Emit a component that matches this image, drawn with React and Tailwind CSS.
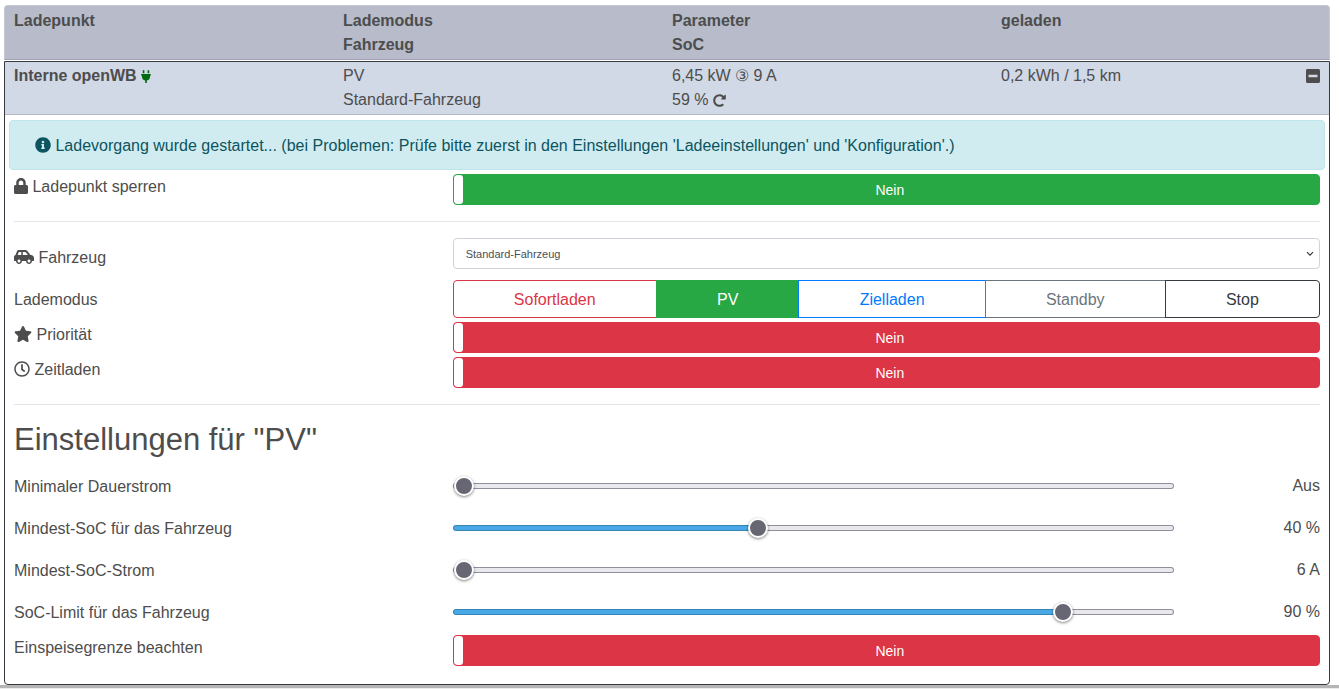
import { useState } from 'react'
import {
  FaPlug, FaRedoAlt, FaMinusSquare, FaInfoCircle, FaLock, FaCarSide, FaStar, FaRegClock,
} from 'react-icons/fa'
import clsx from 'clsx'

const chargeModes = [
  { id: 'instant', label: 'Sofortladen', idle: 'border-[#dc3545] text-[#dc3545]', active: 'border-[#dc3545] bg-[#dc3545] text-white' },
  { id: 'pv', label: 'PV', idle: 'border-[#28a745] text-[#28a745]', active: 'border-[#28a745] bg-[#28a745] text-white' },
  { id: 'target', label: 'Zielladen', idle: 'border-[#007bff] text-[#007bff]', active: 'border-[#007bff] bg-[#007bff] text-white' },
  { id: 'standby', label: 'Standby', idle: 'border-[#6c757d] text-[#6c757d]', active: 'border-[#6c757d] bg-[#6c757d] text-white' },
  { id: 'stop', label: 'Stop', idle: 'border-[#343a40] text-[#343a40]', active: 'border-[#343a40] bg-[#343a40] text-white' },
]

const sliders = [
  { id: 'min-current', label: 'Minimaler Dauerstrom', min: 0, max: 16, step: 1, value: 0, format: (v) => (v ? `${v} A` : 'Aus') },
  { id: 'min-soc', label: 'Mindest-SoC für das Fahrzeug', min: 0, max: 95, step: 5, value: 40, format: (v) => (v ? `${v} %` : 'Aus') },
  { id: 'min-soc-current', label: 'Mindest-SoC-Strom', min: 6, max: 32, step: 1, value: 6, format: (v) => `${v} A` },
  { id: 'soc-limit', label: 'SoC-Limit für das Fahrzeug', min: 0, max: 105, step: 5, value: 90, format: (v) => (v > 100 ? 'Aus' : `${v} %`) },
]

function Icon({ as: Glyph, className = 'w-4 h-4' }) {
  return <Glyph aria-hidden="true" className={clsx('inline-block align-[-0.125em]', className)} />
}

function Row({ id, label, icon, iconClass, padded, children }) {
  return (
    <div className="grid grid-cols-3 mb-1">
      <label htmlFor={id} className={clsx('px-[5px]', padded ? 'pt-2 pb-[6px]' : 'pt-px')}>
        {icon && <Icon as={icon} className={iconClass} />} {label}
      </label>
      <div className="col-span-2 px-[5px]">{children}</div>
    </div>
  )
}

function Toggle({ id, off = 'danger' }) {
  const [on, setOn] = useState(false)
  const green = on ? off === 'danger' : off === 'success'

  return (
    <label
      className={clsx(
        'relative flex h-[31px] rounded border overflow-hidden cursor-pointer text-sm text-white',
        green ? 'bg-[#28a745] border-[#28a745]' : 'bg-[#dc3545] border-[#dc3545]',
        on && 'flex-row-reverse'
      )}
    >
      <input id={id} type="checkbox" className="sr-only" checked={on} onChange={(e) => setOn(e.target.checked)} />
      <span className="w-[9px] rounded-[3px] bg-white" />
      <span className="flex-1 pr-[2px] text-center leading-[31px]">{on ? 'Ja' : 'Nein'}</span>
    </label>
  )
}

function Slider({ id, label, min, max, step, value, format }) {
  const [current, setCurrent] = useState(value)
  const part = (current - min) / (max - min)
  const stop = part === 0 ? '0px' : `calc(10px + (100% - 20px) * ${part})`

  return (
    <Row id={id} label={label} padded>
      <div className="grid grid-cols-6 -mx-[5px]">
        <div className="col-span-5 flex items-center h-[38px] px-[5px]">
          <input
            id={id}
            type="range"
            min={min}
            max={max}
            step={step}
            value={current}
            onChange={(e) => setCurrent(Number(e.target.value))}
            className="w-full h-[6px] appearance-none rounded-full border border-transparent [&::-webkit-slider-thumb]:appearance-none [&::-webkit-slider-thumb]:size-5 [&::-webkit-slider-thumb]:rounded-full [&::-webkit-slider-thumb]:border-2 [&::-webkit-slider-thumb]:border-white [&::-webkit-slider-thumb]:bg-[#676774] [&::-webkit-slider-thumb]:shadow-[0_1px_3px_rgba(0,0,0,0.5)]"
            style={{
              background: `linear-gradient(to right, #48a9e6 ${stop}, #e9e9ed ${stop}) padding-box, linear-gradient(to right, #3584b5 ${stop}, #8f8f9d ${stop}) border-box`,
            }}
          />
        </div>
        <output htmlFor={id} className="px-[5px] pt-[7px] text-right">{format(current)}</output>
      </div>
    </Row>
  )
}

export default function App() {
  const [mode, setMode] = useState('pv')

  return (
    <div className="bg-white font-['Liberation_Sans',Arial,sans-serif] text-base text-[#4d4d4d]">
      <main className="ml-1 mr-[9px] pt-[5px]">
        <div className="grid grid-cols-4 mb-px px-1 pt-[3px] pb-[2px] rounded-t border border-[#c5c8d3] border-b-[#9fa3b1] bg-[#b7bbca] font-bold">
          <div className="px-[5px]">Ladepunkt</div>
          <div className="px-[5px]">Lademodus<br />Fahrzeug</div>
          <div className="px-[5px]">Parameter<br />SoC</div>
          <div className="px-[5px]">geladen</div>
        </div>

        <section className="rounded-b border border-[#343a40]">
          <div className="grid grid-cols-4 px-1 py-[2px] border-b border-[#b4b9c5] bg-[#d1d8e6]">
            <div className="px-[5px] font-bold">
              Interne openWB <Icon as={FaPlug} className="w-[10px] h-[13px] text-[#006b12]" />
            </div>
            <div className="px-[5px]">PV<br />Standard-Fahrzeug</div>
            <div className="px-[5px]">
              <div className="h-6">6,45 kW ③ 9 A</div>
              <div className="h-6">
                59 %{' '}
                <button type="button" aria-label="SoC aktualisieren">
                  <Icon as={FaRedoAlt} className="w-[13px] h-[13px]" />
                </button>
              </div>
            </div>
            <div className="flex items-start justify-between px-[5px]">
              <span>0,2 kWh / 1,5 km</span>
              <button type="button" aria-label="Details ausblenden" className="pt-px">
                <Icon as={FaMinusSquare} className="w-[14px] h-4" />
              </button>
            </div>
          </div>

          <div className="px-1 pt-[5px] pb-[14px]">
            <div role="alert" className="mb-1 px-[25px] pt-[13px] pb-[11px] rounded border border-[#bee5eb] bg-[#d1ecf1] text-[#0c5460]">
              <Icon as={FaInfoCircle} /> Ladevorgang wurde gestartet... (bei Problemen: Prüfe bitte zuerst in den
              Einstellungen 'Ladeeinstellungen' und 'Konfiguration'.)
            </div>

            <Row id="lock" label="Ladepunkt sperren" icon={FaLock} iconClass="w-[14px] h-4">
              <Toggle id="lock" off="success" />
            </Row>

            <hr className="mx-[5px] my-4 border-[#e5e5e5]" />

            <Row id="vehicle" label="Fahrzeug" icon={FaCarSide} iconClass="w-5 h-4" padded>
              <div className="relative">
                <select
                  id="vehicle"
                  className="block w-full h-[31px] px-3 pt-[2px] appearance-none rounded border border-[#ced4da] bg-white text-[11px] text-[#495057]"
                >
                  <option>Standard-Fahrzeug</option>
                </select>
                <svg
                  viewBox="0 0 8 6"
                  className="absolute right-[6px] top-[13px] w-2 h-[6px] pointer-events-none"
                  fill="none"
                  stroke="#343a40"
                  strokeWidth="1.2"
                >
                  <path d="M1 1.2 L4 4.2 L7 1.2" />
                </svg>
              </div>
            </Row>

            <div className="grid grid-cols-3 mb-1">
              <div id="mode-label" className="px-[5px] pt-2 pb-[6px]">Lademodus</div>
              <div className="col-span-2 px-[5px]">
                <div role="group" aria-labelledby="mode-label" className="flex">
                  {chargeModes.map((item) => (
                    <button
                      key={item.id}
                      type="button"
                      aria-pressed={mode === item.id}
                      onClick={() => setMode(item.id)}
                      className={clsx(
                        'flex-auto h-[38px] px-3 pt-[2px] border not-first:-ml-px first:rounded-l last:rounded-r',
                        mode === item.id ? item.active : item.idle
                      )}
                    >
                      {item.label}
                    </button>
                  ))}
                </div>
              </div>
            </div>

            <Row id="priority" label="Priorität" icon={FaStar} iconClass="w-[18px] h-4">
              <Toggle id="priority" />
            </Row>
            <Row id="time-charging" label="Zeitladen" icon={FaRegClock}>
              <Toggle id="time-charging" />
            </Row>

            <hr className="mx-[5px] my-4 border-[#e5e5e5]" />

            <h2 className="px-[5px] mb-2 text-[31px] leading-[38px]">Einstellungen für "PV"</h2>

            {sliders.map((item) => (
              <Slider key={item.id} {...item} />
            ))}
            <Row id="feed-in" label="Einspeisegrenze beachten">
              <Toggle id="feed-in" />
            </Row>
          </div>
        </section>
      </main>
      <div className="h-1 border-b border-[#ececec] bg-[#b5b5b5]" />
    </div>
  )
}
